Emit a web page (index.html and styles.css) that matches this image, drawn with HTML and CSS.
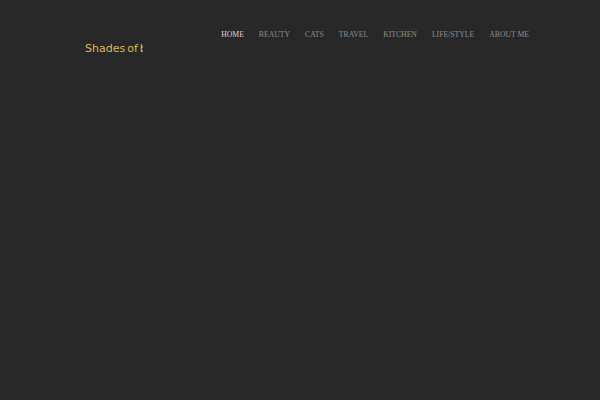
FILE: index.html
```html
<!DOCTYPE html>
<html>
<head>
<meta charset="utf-8">
<link rel="stylesheet" href="styles.css">
</head>
<body>
<header class="header">
  <div class="logo"><span class="logo-text">Shades of blue</span></div>
  <nav class="nav">
    <a class="nav-item active">HOME</a>
    <a class="nav-item">BEAUTY</a>
    <a class="nav-item">CATS</a>
    <a class="nav-item">TRAVEL</a>
    <a class="nav-item">KITCHEN</a>
    <a class="nav-item">LIFE/STYLE</a>
    <a class="nav-item">ABOUT ME</a>
  </nav>
</header>
</body>
</html>
```
FILE: styles.css
```css
html, body {
  margin: 0;
  padding: 0;
  background: #282828;
  width: 600px;
  height: 400px;
  overflow: hidden;
}
.header {
  display: flex;
  justify-content: space-between;
  align-items: flex-start;
  padding: 0 71px 0 85px;
}
.logo {
  width: 58px;
  overflow: hidden;
  white-space: nowrap;
  margin-top: 38px;
}
.logo-text {
  font-family: "DejaVu Sans", sans-serif;
  font-size: 11px;
  word-spacing: -1.5px;
  color: #dcb95f;
  line-height: 14px;
}
.nav {
  display: flex;
  gap: 15px;
  margin-top: 30px;
}
.nav-item {
  font-family: "Liberation Serif", serif;
  font-size: 7.7px;
  line-height: 10px;
  color: #8e8e8e;
  white-space: nowrap;
}
.nav-item.active {
  color: #d8d8d8;
}
```
